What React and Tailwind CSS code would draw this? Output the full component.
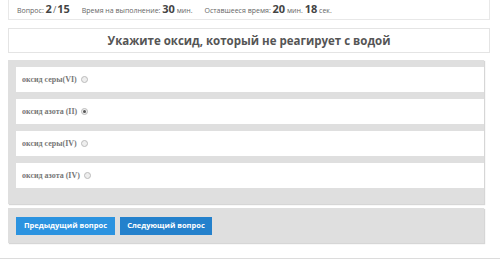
export default function App() {
  const options = [
    { label: "оксид серы(VI)", checked: false },
    { label: "оксид азота (II)", checked: true },
    { label: "оксид серы(IV)", checked: false },
    { label: "оксид азота (IV)", checked: false },
  ];

  return (
    <div className="w-[500px] h-[262px] bg-white overflow-hidden font-['Open_Sans',sans-serif] text-[#555]">
      <div className="w-[482px] ml-[8px] h-[20px] border border-t-0 border-[#e8e8e8] flex items-center gap-[12px] px-[8px] text-[7px] text-[#666] whitespace-nowrap">
        <span>
          Вопрос: <b className="text-[11px] text-[#444]">2</b>
          <span className="text-[9px] mx-[1px]">/</span>
          <b className="text-[11px] text-[#444]">15</b>
        </span>
        <span>
          Время на выполнение: <b className="text-[11px] text-[#444]">30</b> мин.
        </span>
        <span>
          Оставшееся время: <b className="text-[11px] text-[#444]">20</b> мин.{" "}
          <b className="text-[11px] text-[#444]">18</b> сек.
        </span>
      </div>

      <div className="w-[482px] ml-[8px] mt-[8px] h-[25px] border border-[#e4e4e4] flex items-center justify-center text-[11.5px] font-bold text-[#555]">
        Укажите оксид, который не реагирует с водой
      </div>

      <div className="w-[476px] ml-[8px] mt-[7px] bg-[#dfdfdf] pt-[7px] pl-[8px] pb-[16px] flex flex-col gap-[7px] shadow-[1px_1px_1px_#d6d6d6]">
        {options.map((o) => (
          <div
            key={o.label}
            className="h-[25px] bg-white flex items-center pl-[6px] gap-[4px] font-['Liberation_Serif',serif] font-bold text-[8px] text-[#777]"
          >
            <span>{o.label}</span>
            <span className="w-[7px] h-[7px] rounded-full border border-[#bbb] bg-[#eee] flex items-center justify-center">
              {o.checked && <span className="w-[3px] h-[3px] rounded-full bg-[#555]" />}
            </span>
          </div>
        ))}
      </div>

      <div className="w-[476px] ml-[8px] mt-[4px] h-[35px] bg-[#dfdfdf] flex items-center pl-[8px] gap-[5px] shadow-[1px_1px_1px_#d6d6d6]">
        <button className="w-[99px] h-[18px] bg-[#2b93e0] text-white text-[7.5px] font-bold">
          Предыдущий вопрос
        </button>
        <button className="w-[92px] h-[18px] bg-[#2481cc] text-white text-[7.5px] font-bold">
          Следующий вопрос
        </button>
      </div>

      <div className="mt-[15px] h-[1px] bg-[#dcdcdc]" />
    </div>
  );
}
